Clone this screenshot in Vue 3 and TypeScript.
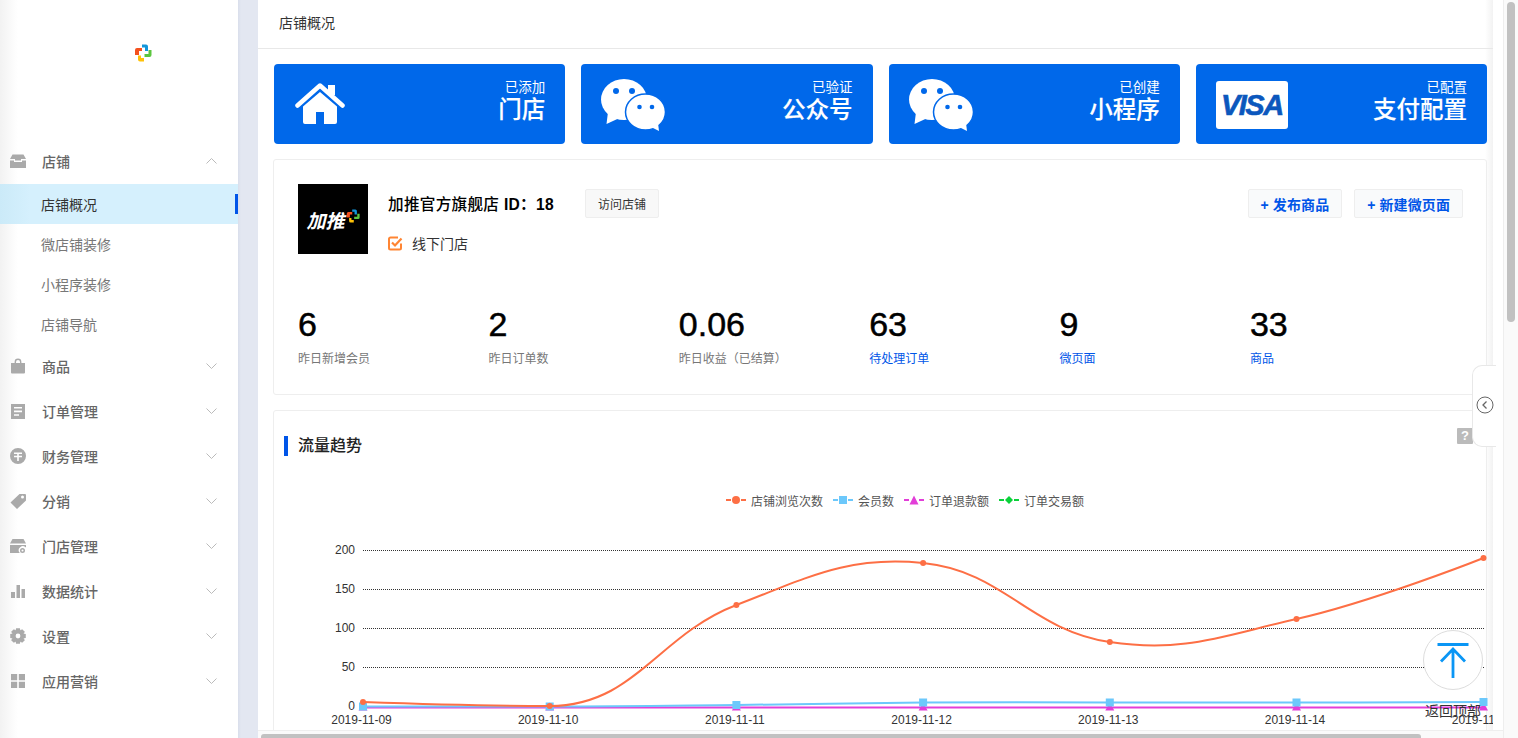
<script setup lang="ts">
interface Point { x: number; y: number }

// build the gear outline once, 8 teeth round the middle
function gearPath(): string {
  const pts: string[] = []
  for (let i = 0; i < 8; i++) {
    const a = (i * Math.PI) / 4
    const steps: [number, number][] = [[5.9, -0.42], [8, -0.24], [8, 0.24], [5.9, 0.42]]
    for (const [r, off] of steps) {
      pts.push(`${(8 + r * Math.cos(a + off)).toFixed(2)} ${(8 + r * Math.sin(a + off)).toFixed(2)}`)
    }
  }
  return `M${pts.join('L')}zM8 5.6a2.4 2.4 0 1 0 0 4.8a2.4 2.4 0 1 0 0-4.8z`
}

const menu = [
  { label: '店铺', open: true, icon: 'M2.5 1.5h11L16 6h-5v1.5H5V6H0zM0 7.5h4V9h8V7.5h4V15H0z' },
  { label: '商品', icon: 'M1 5h14v9.5a1 1 0 0 1-1 1H2a1 1 0 0 1-1-1zM4.6 5V4a3.4 3.4 0 0 1 6.8 0v1H10V4a2 2 0 0 0-4 0v1z' },
  { label: '订单管理', icon: 'M1 1h14v15H1zM4 4v1.6h8V4zM4 7.6v1.6h8V7.6zM4 11.2v1.6h5v-1.6z' },
  { label: '财务管理', icon: 'M8 0a8 8 0 1 0 0 16A8 8 0 0 0 8 0zM4 4.5h8V6H8.8v1.8H12v1.5H8.8V13H7.2V9.3H4V7.8h3.2V6H4z' },
  { label: '分销', icon: 'M9.5 1H15a1 1 0 0 1 1 1v5.5L7 16 .5 9.5zM11 4a1.5 1.5 0 1 0 3 0a1.5 1.5 0 1 0-3 0z' },
  { label: '门店管理', icon: 'M2.5 1h11L16 5.5H0zM0 7h16v2.6a4 4 0 0 0-6.2 5.4H0zM12.5 10a2.5 2.5 0 1 0 0 5a2.5 2.5 0 1 0 0-5zM12.5 11.5a1 1 0 1 1 0 2a1 1 0 1 1 0-2z' },
  { label: '数据统计', icon: 'M1 9h4v6H1zM6.5 2h3.5v13H6.5zM11.5 6H15v9h-3.5z' },
  { label: '设置', icon: gearPath() },
  { label: '应用营销', icon: 'M1 1h6.2v6.2H1zM8.8 1H15v6.2H8.8zM1 8.8h6.2V15H1zM8.8 8.8H15V15H8.8z' }
]
const subMenu = ['店铺概况', '微店铺装修', '小程序装修', '店铺导航']

const cards = [
  { top: '已添加', name: '门店', kind: 'home' },
  { top: '已验证', name: '公众号', kind: 'chat' },
  { top: '已创建', name: '小程序', kind: 'chat' },
  { top: '已配置', name: '支付配置', kind: 'visa' }
]

const stats = [
  { value: '6', label: '昨日新增会员' },
  { value: '2', label: '昨日订单数' },
  { value: '0.06', label: '昨日收益（已结算）' },
  { value: '63', label: '待处理订单', link: true },
  { value: '9', label: '微页面', link: true },
  { value: '33', label: '商品', link: true }
]

const legend = [
  { label: '店铺浏览次数', color: '#fd6f45', shape: 'circle' },
  { label: '会员数', color: '#6cc8fb', shape: 'square' },
  { label: '订单退款额', color: '#e23ed8', shape: 'triangle' },
  { label: '订单交易额', color: '#0bd13a', shape: 'diamond' }
]

const xs = [363, 549.7, 736.4, 923.1, 1109.8, 1296.5, 1483.5]
const dates = ['2019-11-09', '2019-11-10', '2019-11-11', '2019-11-12', '2019-11-13', '2019-11-14', '2019-11-15']
const ticks = [
  { label: '200', y: 550.5 },
  { label: '150', y: 589.5 },
  { label: '100', y: 628.5 },
  { label: '50', y: 667.5 },
  { label: '0', y: 706.5 }
]

const toPoints = (ys: number[]): Point[] => ys.map((y, i) => ({ x: xs[i], y }))
const views = toPoints([702, 706, 605, 563, 642, 619, 558])
const members = toPoints([706.5, 706.5, 705, 702.5, 702.5, 702.5, 702])
const refunds = toPoints([707.5, 707.5, 707.5, 707.5, 707.5, 707.5, 707.5])

// spline with tangents along prev -> next, flat where the first dip sits
function splinePath(p: Point[]): string {
  const s = 1.5
  const d = s + 1
  let out = `M${p[0].x} ${p[0].y}`
  let prevRight = p[0]
  for (let i = 1; i < p.length; i++) {
    const cur = p[i]
    const last = p[i - 1]
    const next = p[i + 1]
    let left = cur
    let right = cur
    if (next) {
      const angle = i === 1 ? 0 : Math.atan2(next.y - last.y, next.x - last.x)
      const ll = Math.hypot(cur.x - last.x, cur.y - last.y) / d
      const rl = Math.hypot(next.x - cur.x, next.y - cur.y) / d
      left = { x: cur.x - ll * Math.cos(angle), y: cur.y - ll * Math.sin(angle) }
      right = { x: cur.x + rl * Math.cos(angle), y: cur.y + rl * Math.sin(angle) }
    }
    out += `C${prevRight.x.toFixed(1)} ${prevRight.y.toFixed(1)} ${left.x.toFixed(1)} ${left.y.toFixed(1)} ${cur.x.toFixed(1)} ${cur.y.toFixed(1)}`
    prevRight = right
  }
  return out
}

const linePath = (p: Point[]) => `M${p.map(q => `${q.x} ${q.y}`).join('L')}`
</script>

<template>
  <div class="app">
    <aside class="sidebar">
      <div class="brand">
        <svg width="18" height="18" viewBox="0 0 18 18">
          <path d="M1 6a2 2 0 0 1 2-2h5v3H5v4H1z" fill="#f4511e" />
          <path d="M8 .5h4a2 2 0 0 1 2 2V7h-3V3.500H8z" fill="#1296db" />
          <path d="M14.500 6h3v5a2 2 0 0 1-2 2h-5v-3h4z" fill="#5cc63f" />
          <path d="M4 11.500h3V14h3v3.500H6a2 2 0 0 1-2-2z" fill="#ffc107" />
        </svg>
      </div>
      <nav class="menu">
        <div v-for="item in menu" :key="item.label">
          <div class="menu-head" :class="{ first: item.open }">
            <svg class="menu-icon" width="16" height="16" viewBox="0 0 16 16">
              <path :d="item.icon" fill="#aaa" fill-rule="evenodd" />
            </svg>
            <span class="menu-label">{{ item.label }}</span>
            <svg class="chevron" width="11" height="6" viewBox="0 0 11 6">
              <path :d="item.open ? 'M.5 5.500l5-5 5 5' : 'M.5 .5l5 5 5-5'" fill="none" stroke="#bbb" />
            </svg>
          </div>
          <template v-if="item.open">
            <div v-for="(sub, i) in subMenu" :key="sub" class="sub-item" :class="{ active: i === 0 }">{{ sub }}</div>
          </template>
        </div>
      </nav>
    </aside>
    <div class="gutter"></div>

    <div class="main">
      <div class="main-row">
        <div class="page">
          <header class="page-head">店铺概况</header>

          <section class="cards">
            <div v-for="card in cards" :key="card.name" class="card">
              <svg v-if="card.kind === 'home'" class="home-icon" width="50" height="42" viewBox="0 0 50 42">
                <path d="M33 2h7v10h-7z" fill="#fff" />
                <path d="M2.500 22.500L25 2.500l22.500 20" fill="none" stroke="#fff" stroke-width="4.500" stroke-linecap="round" stroke-linejoin="round" />
                <path d="M25 9l17 14.500v15.500a2 2 0 0 1-2 2H10a2 2 0 0 1-2-2V23.500zM21 41V29h8v12z" fill="#fff" fill-rule="evenodd" />
              </svg>
              <svg v-else-if="card.kind === 'chat'" class="chat-icon" width="64" height="52" viewBox="0 0 64 52">
                <ellipse cx="23" cy="20.500" rx="23" ry="20.500" fill="#fff" />
                <path d="M7 33l-1.500 12 13-6z" fill="#fff" />
                <circle cx="15" cy="12" r="3" fill="#0068ea" />
                <circle cx="31" cy="12" r="3" fill="#0068ea" />
                <ellipse cx="44.500" cy="33" rx="20" ry="18" fill="#fff" stroke="#0068ea" stroke-width="1.500" />
                <path d="M50 48l8 4-1-8z" fill="#fff" />
                <circle cx="38.500" cy="28" r="2.300" fill="#0068ea" />
                <circle cx="51" cy="28" r="2.300" fill="#0068ea" />
              </svg>
              <div v-else class="visa"><span>VISA</span></div>
              <div class="card-text">
                <div class="card-top">{{ card.top }}</div>
                <div class="card-name">{{ card.name }}</div>
              </div>
            </div>
          </section>

          <section class="panel info">
            <div class="shop">
              <div class="shop-logo">
                <span>加推</span>
                <svg width="14" height="14" viewBox="0 0 18 18">
                  <path d="M1 6a2 2 0 0 1 2-2h5v3H5v4H1z" fill="#f4511e" />
                  <path d="M8 .5h4a2 2 0 0 1 2 2V7h-3V3.500H8z" fill="#1296db" />
                  <path d="M14.500 6h3v5a2 2 0 0 1-2 2h-5v-3h4z" fill="#5cc63f" />
                  <path d="M4 11.500h3V14h3v3.500H6a2 2 0 0 1-2-2z" fill="#ffc107" />
                </svg>
              </div>
              <div class="shop-meta">
                <div class="shop-title">
                  <span class="shop-name">加推官方旗舰店 <b>ID：18</b></span>
                  <button class="visit">访问店铺</button>
                </div>
                <div class="shop-tag">
                  <svg width="15" height="15" viewBox="0 0 15 15">
                    <path d="M13 7.500V12a1.500 1.500 0 0 1-1.500 1.500H2.500A1.500 1.500 0 0 1 1 12V3a1.500 1.500 0 0 1 1.500-1.500H10" fill="none" stroke="#ff8533" stroke-width="2" />
                    <path d="M4 6.500l3 3 6.500-7" fill="none" stroke="#ff8533" stroke-width="2.200" />
                  </svg>
                  <span>线下门店</span>
                </div>
              </div>
              <div class="shop-actions">
                <button class="action">+ 发布商品</button>
                <button class="action">+ 新建微页面</button>
              </div>
            </div>
            <div class="stats">
              <div v-for="stat in stats" :key="stat.label">
                <div class="stat-value">{{ stat.value }}</div>
                <div class="stat-label" :class="{ link: stat.link }">{{ stat.label }}</div>
              </div>
            </div>
          </section>

          <section class="panel trend">
            <div class="trend-head">
              <h2 class="trend-title">流量趋势</h2>
              <span class="help">?</span>
            </div>
            <div class="legend">
              <div v-for="entry in legend" :key="entry.label" class="legend-item">
                <svg width="20" height="10" viewBox="0 0 20 10">
                  <path d="M0 5h20" :stroke="entry.color" stroke-width="2" stroke-dasharray="5 10" />
                  <circle v-if="entry.shape === 'circle'" cx="10" cy="5" r="4" :fill="entry.color" />
                  <rect v-else-if="entry.shape === 'square'" x="6" y="1" width="8" height="8" :fill="entry.color" />
                  <path v-else-if="entry.shape === 'triangle'" d="M10 .5l4.500 9h-9z" :fill="entry.color" />
                  <path v-else d="M10 1l4 4-4 4-4-4z" :fill="entry.color" />
                </svg>
                <span>{{ entry.label }}</span>
              </div>
            </div>
            <svg class="chart" width="1220" height="218" viewBox="273 520 1220 218">
              <g v-for="tick in ticks" :key="tick.label">
                <line v-if="tick.label !== '0'" x1="363" x2="1484" :y1="tick.y" :y2="tick.y" stroke="#333" stroke-dasharray="1 1" />
                <text x="355" :y="tick.y + 3" text-anchor="end" class="axis">{{ tick.label }}</text>
              </g>
              <text v-for="(date, i) in dates" :key="date" :x="xs[i] - 1.500" y="724" text-anchor="middle" class="axis">{{ date }}</text>

              <path :d="linePath(refunds)" fill="none" stroke="#e23ed8" stroke-width="2" />
              <path v-for="p in refunds" :key="p.x" :d="`M${p.x} ${p.y - 5}l4.500 8h-9z`" fill="#e23ed8" />
              <path :d="splinePath(members)" fill="none" stroke="#6cc8fb" stroke-width="2" />
              <rect v-for="p in members" :key="p.x" :x="p.x - 4" :y="p.y - 4" width="8" height="8" fill="#6cc8fb" />
              <path :d="splinePath(views)" fill="none" stroke="#fd6f45" stroke-width="2" />
              <circle v-for="p in views" :key="p.x" :cx="p.x" :cy="p.y" r="3" fill="#fd6f45" />
            </svg>
          </section>
        </div>
        <div class="page-side"></div>
      </div>
      <div class="hbar"><div class="hbar-thumb"></div></div>

      <div class="collapse-tab">
        <svg width="18" height="18" viewBox="0 0 18 18">
          <circle cx="9" cy="9" r="8" fill="none" stroke="#666" />
          <path d="M10.500 5.500L7 9l3.500 3.500" fill="none" stroke="#666" stroke-width="1.300" />
        </svg>
      </div>

      <div class="back-top">
        <div class="back-circle">
          <svg width="34" height="36" viewBox="0 0 34 36">
            <path d="M1.500 2.500h31M17 7v32M5 19.500L17 7l12 12.500" fill="none" stroke="#0a96f5" stroke-width="2.800" />
          </svg>
        </div>
        <span class="back-text">返回顶部</span>
      </div>
    </div>

    <div class="vbar"><div class="vbar-thumb"></div></div>
  </div>
</template>

<style>
html, body {
  margin: 0;
  overflow: hidden;
}
</style>

<style scoped>
.app {
  display: flex;
  width: 1518px;
  height: 738px;
  overflow: hidden;
  background: #fff;
  font-family: "Liberation Sans", "Noto Sans CJK SC", sans-serif;
  color: #333;
}

/* sidebar */
.sidebar {
  width: 238px;
  flex: none;
  background: linear-gradient(to right, #f2f2f2, #fff 18px);
}
.brand {
  height: 140px;
  box-sizing: border-box;
  padding: 44px 0 0 134px;
}
.brand svg { display: block; }
.menu-head {
  display: flex;
  align-items: center;
  height: 45px;
  box-sizing: border-box;
  padding: 0 0 2px 10px;
}
.menu-head.first { height: 44px; }
.menu-label {
  margin-left: 16px;
  font-size: 14px;
  font-weight: 500;
  color: #666;
  flex: 1;
}
.chevron { margin-right: 21px; }
.sub-item {
  position: relative;
  height: 40px;
  line-height: 42px;
  padding-left: 41px;
  font-size: 14px;
  color: #777;
}
.sub-item.active {
  background: linear-gradient(to right, #cbeaf8, #d5f0fd 30px);
  color: #333;
}
.sub-item.active::after {
  content: '';
  position: absolute;
  right: 0;
  top: 10px;
  width: 3px;
  height: 20px;
  background: #0055e8;
}
.gutter {
  width: 20px;
  flex: none;
  background: linear-gradient(to right, #d9deeb, #e3e7f1 3px);
}

/* main area */
.main {
  position: relative;
  flex: 1;
  min-width: 0;
  display: flex;
  flex-direction: column;
}
.main-row {
  flex: 1;
  min-height: 0;
  display: flex;
}
.page {
  width: 1235px;
  flex: none;
  overflow: hidden;
  background: linear-gradient(to right, #fff calc(100% - 8px), #f2f2f2);
}
.page-side { flex: 1; }
.page-head {
  height: 48px;
  line-height: 46px;
  padding-left: 21px;
  font-size: 14px;
  color: #333;
  border-bottom: 1px solid #e8e8e8;
}
.cards {
  display: grid;
  grid-template-columns: repeat(4, 1fr);
  gap: 16px;
  width: 1213px;
  margin: 15px 0 0 16px;
}
.card {
  height: 80px;
  box-sizing: border-box;
  padding: 0 20px;
  display: flex;
  align-items: center;
  justify-content: space-between;
  background: #0068ea;
  border-radius: 4px;
  color: #fff;
}
.home-icon { margin-left: 1px; }
.chat-icon { margin-top: 2px; }
.visa {
  width: 72px;
  height: 48px;
  margin-top: 2px;
  background: #fff;
  border-radius: 3px;
  display: flex;
  align-items: center;
  justify-content: center;
}
.visa span {
  font-size: 29px;
  font-weight: 700;
  font-style: italic;
  letter-spacing: -1.500px;
  color: #0b57bd;
  -webkit-text-stroke: 0.6px #0b57bd;
}
.card-text {
  text-align: right;
  padding-bottom: 6px;
}
.card-top {
  font-size: 13.500px;
  line-height: 18px;
}
.card-name {
  font-size: 23.500px;
  line-height: 26px;
  font-weight: 500;
  -webkit-text-stroke: 0.15px #fff;
}
.panel {
  width: 1214px;
  box-sizing: border-box;
  margin-left: 15px;
  border: 1px solid #eee;
  border-radius: 3px;
}
.info {
  height: 236px;
  margin-top: 15px;
  padding: 24px 24px 0;
}
.shop { display: flex; }
.shop-logo {
  width: 70px;
  height: 70px;
  flex: none;
  background: #000;
  display: flex;
  align-items: center;
  justify-content: center;
  gap: 1px;
  color: #fff;
}
.shop-logo span {
  font-size: 19px;
  font-weight: 700;
  font-style: italic;
}
.shop-logo svg { margin-bottom: 7px; }
.shop-meta {
  margin-left: 20px;
  flex: 1;
}
.shop-title {
  display: flex;
  align-items: center;
  height: 30px;
  margin-top: 4px;
}
.shop-name {
  font-size: 15.600px;
  font-weight: 500;
  letter-spacing: 0.3px;
  color: #000;
}
.visit {
  width: 74px;
  height: 29px;
  margin-left: 31px;
  padding: 0;
  border: 1px solid #eee;
  border-radius: 2px;
  background: #f8f8f8;
  font: inherit;
  font-size: 12px;
  color: #333;
}
.shop-tag {
  display: flex;
  align-items: center;
  gap: 9px;
  margin-top: 15px;
  font-size: 14px;
  color: #333;
}
.shop-actions {
  display: flex;
  gap: 12px;
  margin: 5px -1px 0 0;
  align-self: flex-start;
}
.action {
  height: 29px;
  padding: 0 12px;
  border: 1px solid #eee;
  border-radius: 2px;
  background: #f9fafb;
  font: inherit;
  font-size: 14px;
  font-weight: 700;
  letter-spacing: 0.1px;
  color: #0055e8;
}
.stats {
  display: grid;
  grid-template-columns: repeat(6, 190.400px);
  margin-top: 50px;
}
.stat-value {
  font-size: 34px;
  line-height: 40px;
  color: #000;
  -webkit-text-stroke: 0.5px #000;
}
.stat-label {
  margin-top: 6px;
  font-size: 12px;
  line-height: 18px;
  color: #777;
}
.stat-label.link { color: #0055e8; }
.trend {
  height: 400px;
  margin-top: 15px;
}
.trend-head {
  display: flex;
  align-items: center;
  justify-content: space-between;
  padding: 25px 13px 0 10px;
  height: 20px;
}
.trend-title {
  margin: 0;
  padding-left: 10px;
  border-left: 4px solid #0055e8;
  font-size: 16px;
  line-height: 20px;
  font-weight: 500;
  color: #222;
}
.help {
  width: 16px;
  height: 16px;
  margin-top: -20px;
  background: #bbb;
  border-radius: 1px;
  color: #fff;
  font-size: 13px;
  font-weight: 700;
  line-height: 16px;
  text-align: center;
}
.legend {
  display: flex;
  justify-content: center;
  gap: 10px;
  margin-top: 34px;
  padding-left: 50px;
  height: 20px;
  align-items: center;
  font-size: 12px;
  color: #555;
}
.legend-item {
  display: flex;
  align-items: center;
  gap: 5px;
}
.chart {
  display: block;
  margin: 10px 0 0 -1px;
}
.axis {
  font-size: 12px;
  fill: #333;
}

/* overlays */
.collapse-tab {
  position: absolute;
  left: 1214px;
  top: 365px;
  width: 24px;
  height: 82px;
  box-sizing: border-box;
  border: 1px solid #e8e8e8;
  border-right: 0;
  border-radius: 10px 0 0 10px;
  background: #fff;
  display: flex;
  align-items: center;
  padding: 0 0 2px 3px;
}
.back-top {
  position: absolute;
  left: 1165px;
  top: 630px;
  width: 60px;
}
.back-circle {
  width: 60px;
  height: 60px;
  box-sizing: border-box;
  border: 1px solid #ddd;
  border-radius: 50%;
  background: #fff;
  display: flex;
  justify-content: center;
  padding-top: 11px;
}
.back-text {
  position: absolute;
  left: 2px;
  top: 70px;
  font-size: 14px;
  white-space: nowrap;
  color: #333;
}

/* fake scroll bars, the page is a fixed frame */
.hbar {
  height: 8px;
  flex: none;
  box-sizing: border-box;
  border-top: 1px solid #eee;
  background: #fafafa;
  padding: 3px 0 0 3px;
}
.hbar-thumb {
  width: 1160px;
  height: 5px;
  background: #c1c1c1;
  border-radius: 3px 3px 0 0;
}
.vbar {
  width: 15px;
  flex: none;
  box-sizing: border-box;
  border-left: 1px solid #eee;
  background: #fafafa;
  padding: 2px 3px 0 3px;
}
.vbar-thumb {
  width: 8px;
  height: 320px;
  background: #c1c1c1;
  border-radius: 4px;
}
</style>
